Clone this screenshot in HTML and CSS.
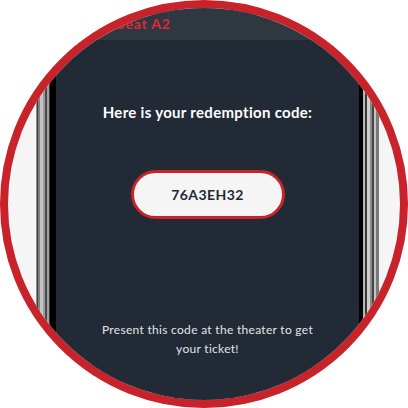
FILE: index.html
```html
<!DOCTYPE html>
<html lang="en">
<head>
<meta charset="utf-8">
<title>Redemption code</title>
<link rel="stylesheet" href="styles.css">
</head>
<body>
<div class="badge">
  <div class="topbar"><span class="seat">Seat A2</span></div>
  <div class="device">
    <div class="frame frame-left"></div>
    <div class="screen">
      <h1 class="heading">Here is your redemption code:</h1>
      <div class="pill">76A3EH32</div>
      <p class="note">Present this code at the theater to get your ticket!</p>
    </div>
    <div class="frame frame-right"></div>
  </div>
</div>
</body>
</html>
```
FILE: styles.css
```css
html, body {
  margin: 0;
  padding: 0;
  background: #ffffff;
}

.badge {
  width: 408px;
  height: 408px;
  box-sizing: border-box;
  border: 8px solid #c8222a;
  border-radius: 50%;
  overflow: hidden;
  background: #f5f5f5;
  display: flex;
  flex-direction: column;
  font-family: Lato, "Open Sans", sans-serif;
}

.topbar {
  height: 32px;
  flex: none;
  box-sizing: border-box;
  padding: 5px 0 0 109px;
  background: #2f3741;
}

.seat {
  color: #e02a32;
  font-size: 14px;
  line-height: 16px;
  font-weight: 700;
  letter-spacing: 0.8px;
}

.device {
  flex: 1;
  display: flex;
  padding-left: 28px;
}

.frame {
  width: 20px;
  flex: none;
}

.frame-left {
  background: linear-gradient(to right,
    #8d8d8d 0 1px, #3c3c3c 1px 2px, #808080 2px 4px, #c4c4c4 4px 7px,
    #9c9c9c 7px 9px, #4a4a4a 9px 11px, #a0a0a0 11px 13px, #3a3a3a 13px 14px,
    #000000 14px 20px);
}

.frame-right {
  background: linear-gradient(to right,
    #000000 0 4px, #b8b8b8 4px 6px, #3a3a3a 6px 8px, #cfcfcf 8px 11px,
    #8a8a8a 11px 13px, #444444 13px 15px, #c4c4c4 15px 17px, #7a7a7a 17px 20px);
}

.screen {
  width: 303px;
  flex: none;
  background: #222a35;
  display: flex;
  flex-direction: column;
  align-items: center;
  padding-top: 62px;
  box-sizing: border-box;
}

.heading {
  margin: 0;
  color: #ffffff;
  font-size: 15px;
  line-height: 20px;
  font-weight: 700;
  letter-spacing: 0.3px;
}

.pill {
  margin-top: 48px;
  width: 154px;
  height: 49px;
  box-sizing: border-box;
  border: 3px solid #c8222a;
  border-radius: 25px;
  background: #f5f5f5;
  display: flex;
  align-items: center;
  justify-content: center;
  color: #222a35;
  font-size: 14px;
  font-weight: 700;
  letter-spacing: 0.4px;
}

.note {
  margin: 101px 0 0;
  width: 224px;
  text-align: center;
  color: #e2e5e8;
  font-size: 12px;
  line-height: 19px;
  font-weight: 400;
  letter-spacing: 0.3px;
}
```
